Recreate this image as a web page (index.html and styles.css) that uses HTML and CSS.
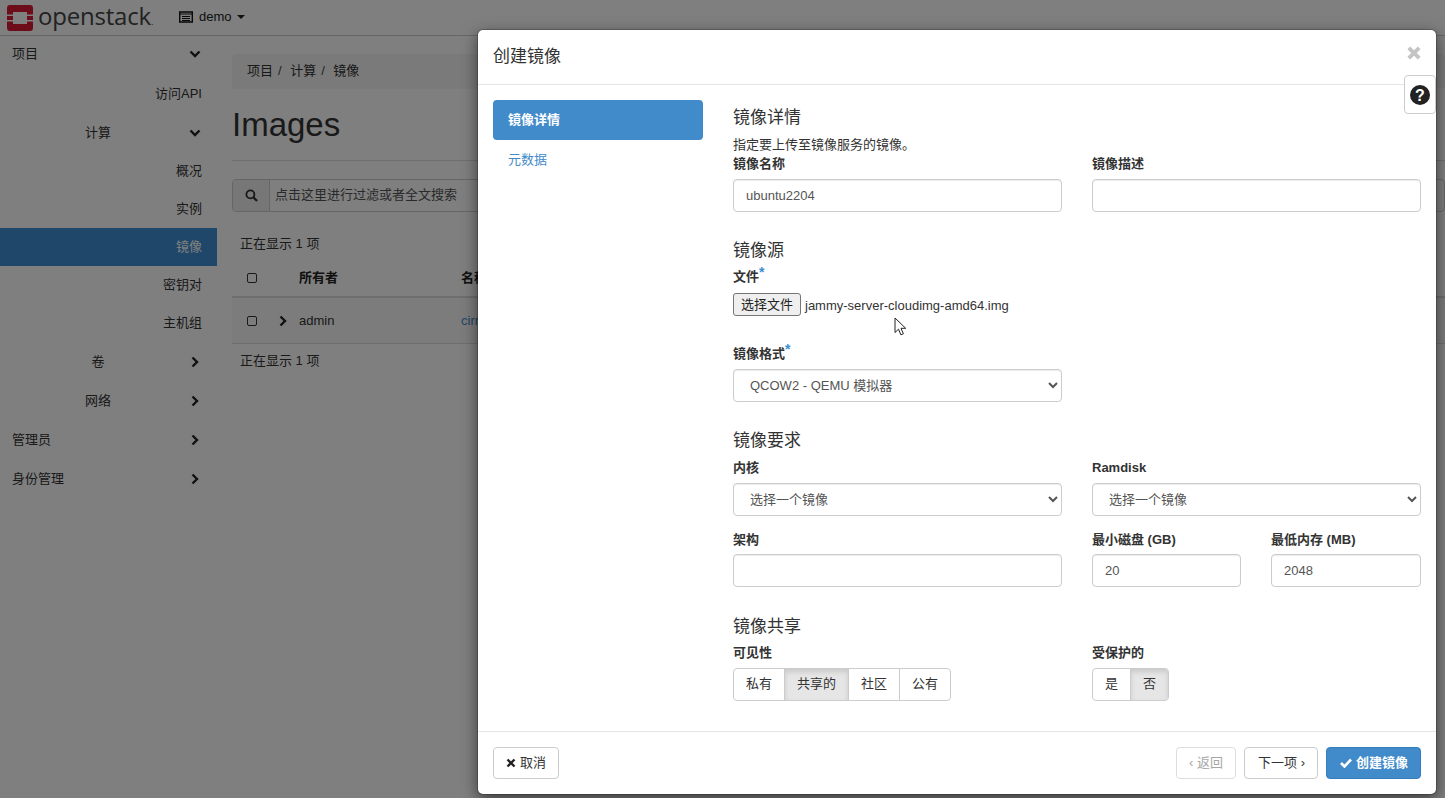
FILE: index.html
```html
<!DOCTYPE html>
<html lang="zh">
<head>
<meta charset="utf-8">
<title>Images</title>
<link rel="stylesheet" href="styles.css">
</head>
<body>
<header class="navbar">
  <svg class="logo" viewBox="0 0 26 26" width="26" height="26"><path fill="#DA1A32" fill-rule="evenodd" d="M3 0h20a3 3 0 0 1 3 3v6.500h-6V7H6v2.500H0V3a3 3 0 0 1 3-3zM0 11h6v4H0zM20 11h6v4h-6zM0 16.500h6V19h14v-2.500h6V23a3 3 0 0 1-3 3H3a3 3 0 0 1-3-3z"/></svg>
  <span class="brand">openstack<small>.</small></span>
  <span class="project">
    <svg class="proj-icon" viewBox="0 0 14 12" width="14" height="12"><path fill="none" stroke="#111" stroke-width="1.400" d="M.7 1h12.600v10H.7z"/><path stroke="#111" stroke-width="1.200" d="M.7 3h12.600M3 5.500h8M3 7.500h8M3 9.500h8"/></svg>
    demo
    <i class="caret"></i>
  </span>
</header>
<div class="page">
  <nav class="sidebar">
    <div class="item top first"><span>项目</span><svg class="chev" viewBox="0 0 12 12"><path d="M1.500 3.500 6 8l4.500-4.500" /></svg></div>
    <div class="item sub">访问API</div>
    <div class="item group"><span>计算</span><svg class="chev" viewBox="0 0 12 12"><path d="M1.500 3.500 6 8l4.500-4.500" /></svg></div>
    <div class="item sub s38">概况</div>
    <div class="item sub s38">实例</div>
    <div class="item sub s38 active">镜像</div>
    <div class="item sub s38">密钥对</div>
    <div class="item sub s38">主机组</div>
    <div class="item group"><span>卷</span><svg class="chev" viewBox="0 0 12 12"><path d="M3.500 1.500 8 6l-4.500 4.500" /></svg></div>
    <div class="item group"><span>网络</span><svg class="chev" viewBox="0 0 12 12"><path d="M3.500 1.500 8 6l-4.500 4.500" /></svg></div>
    <div class="item top"><span>管理员</span><svg class="chev" viewBox="0 0 12 12"><path d="M3.500 1.500 8 6l-4.500 4.500" /></svg></div>
    <div class="item top"><span>身份管理</span><svg class="chev" viewBox="0 0 12 12"><path d="M3.500 1.500 8 6l-4.500 4.500" /></svg></div>
  </nav>
  <main class="content">
    <div class="crumbs"><span>项目</span><b>/</b><span>计算</span><b>/</b><span>镜像</span></div>
    <h1 class="title">Images</h1>
    <div class="filter">
      <span class="filter-icon"><svg viewBox="0 0 14 14" width="13" height="13"><circle cx="5.800" cy="5.800" r="4.300" fill="none" stroke="#333" stroke-width="2"/><path d="m9 9 4 4" stroke="#333" stroke-width="2.400"/></svg></span>
      <span class="filter-text">点击这里进行过滤或者全文搜索</span>
    </div>
    <div class="count">正在显示 1 项</div>
    <div class="thead"><i class="check"></i><b class="owner">所有者</b><b>名称</b></div>
    <div class="trow">
      <i class="check"></i>
      <svg class="row-chev" viewBox="0 0 12 12"><path d="M3.500 1.500 8 6l-4.500 4.500" /></svg>
      <span class="owner2">admin</span><a class="link">cirros</a>
    </div>
    <div class="count count2">正在显示 1 项</div>
  </main>
</div>

<div class="backdrop"></div>

<section class="modal">
  <div class="modal-head">
    <h2>创建镜像</h2>
    <svg class="close" viewBox="0 0 14 14" width="14" height="14"><path d="M1.800 1.800l10.400 10.400M12.200 1.800 1.800 12.200" stroke="#c4c4c4" stroke-width="3.800"/></svg>
  </div>
  <div class="modal-body">
    <aside class="steps">
      <div class="step on">镜像详情</div>
      <div class="step">元数据</div>
    </aside>
    <form class="form">
      <h3>镜像详情</h3>
      <p class="help">指定要上传至镜像服务的镜像。</p>
      <div class="cols">
        <div class="field"><label>镜像名称</label><input class="ctl" value="ubuntu2204"></div>
        <div class="field"><label>镜像描述</label><input class="ctl"></div>
      </div>

      <h3 class="sec-source">镜像源</h3>
      <label class="l-file">文件<em>*</em></label>
      <div class="file"><span class="file-btn">选择文件</span><span class="file-name">jammy-server-cloudimg-amd64.img</span></div>
      <div class="cols c-format">
        <div class="field"><label>镜像格式<em>*</em></label>
          <select class="ctl"><option>QCOW2 - QEMU 模拟器</option></select></div>
      </div>

      <h3 class="sec-req">镜像要求</h3>
      <div class="cols">
        <div class="field"><label>内核</label><select class="ctl"><option>选择一个镜像</option></select></div>
        <div class="field"><label>Ramdisk</label><select class="ctl"><option>选择一个镜像</option></select></div>
      </div>
      <div class="cols c-arch">
        <div class="field"><label>架构</label><input class="ctl"></div>
        <div class="cols inner">
          <div class="field"><label>最小磁盘 (GB)</label><input class="ctl" value="20"></div>
          <div class="field"><label>最低内存 (MB)</label><input class="ctl" value="2048"></div>
        </div>
      </div>

      <h3 class="sec-share">镜像共享</h3>
      <div class="cols">
        <div class="field"><label>可见性</label>
          <div class="btn-group"><span>私有</span><span class="pressed">共享的</span><span>社区</span><span>公有</span></div>
        </div>
        <div class="field"><label>受保护的</label>
          <div class="btn-group"><span>是</span><span class="pressed">否</span></div>
        </div>
      </div>
    </form>
  </div>
  <div class="modal-foot">
    <span class="btn"><svg viewBox="0 0 10 10" width="10" height="10"><path d="M1.500 1.500l7 7M8.500 1.500l-7 7" stroke="#222" stroke-width="2.400"/></svg>取消</span>
    <span class="spacer"></span>
    <span class="btn off">‹ 返回</span>
    <span class="btn next">下一项 ›</span>
    <span class="btn primary"><svg viewBox="0 0 12 10" width="12" height="10"><path d="M1 5l3.500 3.500L11 1.500" fill="none" stroke="#fff" stroke-width="2.600"/></svg>创建镜像</span>
  </div>
  <div class="help-tab"><svg viewBox="0 0 20 20" width="20" height="20"><circle cx="10" cy="10" r="10" fill="#222"/><text x="10" y="15.500" text-anchor="middle" class="q">?</text></svg></div>
</section>

<svg class="cursor" viewBox="0 0 13 20" width="13" height="20"><path d="M1 1v14.500l3.500-3.300 2.400 5.600 2.500-1-2.400-5.500h4.700z" fill="#fff" stroke="#222" stroke-width="1"/></svg>
</body>
</html>
```

FILE: styles.css
```css
* { box-sizing: border-box; }
html, body { margin: 0; height: 100%; overflow: hidden; }
body {
  font: 13px/18px "Liberation Sans", "Noto Sans CJK SC", sans-serif;
  color: #333;
  background: #fff;
  width: 1445px;
  height: 798px;
}
.navbar {
  height: 36px;
  border-bottom: 1px solid #ccc;
  display: flex;
  align-items: center;
  padding: 0 0 0 7px;
}
.logo { flex: none; margin-top: 1px; }
.brand {
  font: 500 24px/30px "Open Sans", sans-serif;
  letter-spacing: -0.200px;
  color: #444;
  margin-left: 5px;
  margin-bottom: 4px;
  width: 141px;
  height: 30px;
  white-space: nowrap;
}
.brand small { font-size: 9px; }
.project { display: flex; align-items: center; gap: 4px; color: #222; font-size: 13px; margin-bottom: 2px; }
.proj-icon { display: block; margin-right: 2px; }
.caret { width: 0; height: 0; border: 4px solid transparent; border-top-color: #222; border-bottom: 0; margin-left: 1px; }

.page { display: flex; }
.sidebar { width: 217px; flex: none; }
.item { height: 39px; display: flex; align-items: center; color: #333; }
.item.s38 { height: 38px; }
.item.first { height: 38px; padding-bottom: 2px; }
.item.top { justify-content: space-between; padding-left: 12px; padding-right: 16px; }
.item.group { padding: 0 16px 0 78px; justify-content: space-between; }
.item.group span { width: 40px; text-align: center; }
.item.sub { justify-content: flex-end; padding-right: 15px; }
.item.active { background: #3f8fd2; color: #fff; }
.chev { width: 12px; height: 12px; flex: none; fill: none; stroke: #222; stroke-width: 2.400; }

.content { flex: 1; padding: 18px 0 0 15px; min-width: 0; }
.crumbs {
  height: 35px;
  background: #f5f5f5;
  border-radius: 4px;
  padding: 0 15px 2px;
  display: flex;
  align-items: center;
}
.crumbs b { font-weight: 400; margin: 0 8.500px 0 5px; color: #444; }
.title {
  margin: 0;
  font: 400 33px/36px "Liberation Sans", sans-serif;
  color: #333;
  padding: 18px 0 17px;
  height: 72px;
  border-bottom: 1px solid #ddd;
}
.filter {
  margin-top: 18px;
  height: 33px;
  display: flex;
  border: 1px solid #ccc;
  border-radius: 4px;
}
.filter-icon {
  width: 37px;
  background: #eee;
  border-right: 1px solid #ccc;
  border-radius: 3px 0 0 3px;
  display: flex;
  align-items: center;
  justify-content: center;
}
.filter-text { padding-left: 5px; line-height: 29px; color: #555; }
.count { padding-left: 8px; margin-top: 23px; height: 18px; }
.thead {
  display: flex;
  align-items: center;
  margin-top: 7px;
  border-bottom: 2px solid #ddd;
  padding-left: 15px;
  color: #222;
  height: 38px;
}
.check { width: 10px; height: 10px; border: 1.500px solid #333; border-radius: 2px; flex: none; }
.thead .owner { margin: 0 123px 0 42px; }
.thead b { font-weight: 700; }
.trow {
  height: 46px;
  display: flex;
  align-items: center;
  padding-left: 15px;
  background: #f9f9f9;
  border-bottom: 1px solid #ddd;
}
.row-chev { width: 12px; height: 12px; fill: none; stroke: #222; stroke-width: 2.400; margin: 0 10px 0 20px; flex: none; }
.owner2 { width: 162px; }
.link { color: #428bca; }
.count2 { margin-top: 8px; }

.backdrop { position: absolute; inset: 0; background: rgba(0, 0, 0, .5); }
.modal {
  position: absolute;
  left: 477px;
  top: 29px;
  width: 960px;
  height: 766px;
  background: #fff;
  border-radius: 6px;
  box-shadow: 0 5px 15px rgba(0, 0, 0, .5);
  border: 1px solid rgba(0, 0, 0, .2);
  background-clip: padding-box;
  display: flex;
  flex-direction: column;
}
.modal-head {
  height: 55px;
  flex: none;
  border-bottom: 1px solid #e5e5e5;
  display: flex;
  align-items: center;
  justify-content: space-between;
  padding: 0 15px;
}
.modal-head h2 { margin: 0; font-weight: 400; font-size: 17px; line-height: 20px; color: #333; }
.close { position: relative; top: -4px; }
.modal-body { flex: 1; display: flex; padding: 15px 15px 0; min-height: 0; }
.steps { width: 210px; flex: none; margin-right: 30px; }
.step { height: 40px; padding: 0 15px; line-height: 40px; color: #428bca; border-radius: 4px; }
.step.on { background: #428bca; color: #fff; font-weight: 700; }
.form { flex: 1; min-width: 0; }
.form h3 { margin: 0; font-weight: 400; font-size: 17px; line-height: 20px; color: #333; }
.form > h3:first-child { margin-top: 8px; }
.help { margin: 8px 0 0; line-height: 18px; height: 18px; }
.cols { display: grid; grid-template-columns: 329px 329px; column-gap: 30px; }
.field { min-width: 0; }
.field label, .l-file { display: block; font-weight: 700; line-height: 18px; height: 18px; margin-bottom: 6px; color: #333; }
.form > .cols:nth-of-type(1) { margin-top: 1px; }
em { font-style: normal; font-weight: 700; color: #3a8fd0; position: relative; top: -4px; font-size: 14px; }
.ctl {
  display: block;
  width: 100%;
  height: 33px;
  padding: 6px 12px;
  border: 1px solid #ccc;
  border-radius: 4px;
  background: #fff;
  color: #555;
  font: inherit;
  box-shadow: inset 0 1px 1px rgba(0, 0, 0, .075);
}
.sec-source { margin-top: 29px !important; }
.l-file { margin-top: 6px; margin-bottom: 8px; }
.file { display: flex; align-items: center; height: 23px; }
.file-btn {
  width: 68px;
  height: 23px;
  line-height: 21px;
  text-align: center;
  background: #efefef;
  border: 1px solid #767676;
  border-radius: 3px;
  color: #222;
}
.file-name { margin-left: 4px; padding-top: 2px; color: #333; }
.c-format { margin-top: 28px; }
.c-format label { margin-bottom: 7px; }
.sec-req { margin-top: 29px !important; }
.sec-req + .cols { margin-top: 8px; }
.c-arch { margin-top: 15px; }
.c-arch label { margin-bottom: 5px; }
.inner { grid-template-columns: 149px 150px; }
.sec-share { margin-top: 30px !important; }
.sec-share + .cols { margin-top: 7px; }
.btn-group { display: inline-flex; height: 33px; border: 1px solid #ccc; border-radius: 4px; overflow: hidden; }
.btn-group span { padding: 0 12px; line-height: 29px; border-left: 1px solid #ccc; color: #333; }
.btn-group span:first-child { border-left: 0; }
.btn-group .pressed { background: #e6e6e6; box-shadow: inset 0 3px 5px rgba(0, 0, 0, .125); }
.modal-foot {
  height: 63px;
  flex: none;
  border-top: 1px solid #e5e5e5;
  padding: 15px 15px 0;
  display: flex;
  align-items: flex-start;
  gap: 8px;
}
.spacer { flex: 1; }
.btn {
  height: 32px;
  padding: 0 12px;
  display: inline-flex;
  align-items: center;
  gap: 4px;
  border: 1px solid #ccc;
  border-radius: 4px;
  color: #333;
  white-space: nowrap;
}
.btn.off { opacity: .65; color: #777; }
.btn.next { padding-left: 13px; }
.btn.primary { background: #428bca; border-color: #357ebd; color: #fff; font-weight: 700; padding-left: 13px; }
.help-tab {
  position: absolute;
  right: 0;
  top: 45px;
  width: 32px;
  height: 39px;
  background: #fff;
  border: 1px solid #ccc;
  border-radius: 4px;
  display: flex;
  align-items: center;
  justify-content: center;
}
.q { font: 700 16px "Liberation Sans", sans-serif; fill: #fff; }
.cursor { position: absolute; left: 894px; top: 317px; }
```
